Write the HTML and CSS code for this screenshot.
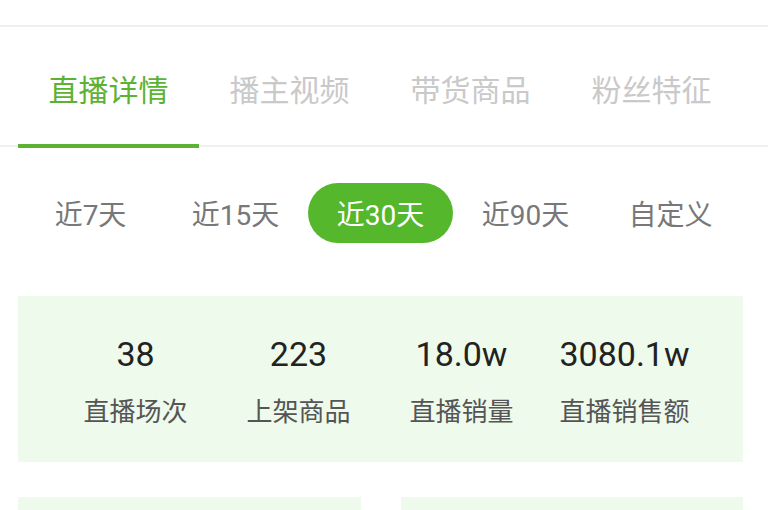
FILE: index.html
```html
<!DOCTYPE html>
<html lang="zh-CN">
<head>
<meta charset="utf-8">
<title>直播详情</title>
<link rel="stylesheet" href="styles.css">
</head>
<body>
<div class="topbar"></div>
<nav class="tabs">
  <div class="tab active">直播详情</div>
  <div class="tab">播主视频</div>
  <div class="tab">带货商品</div>
  <div class="tab">粉丝特征</div>
</nav>
<div class="ranges">
  <div class="range">近7天</div>
  <div class="range">近15天</div>
  <div class="range selected">近30天</div>
  <div class="range">近90天</div>
  <div class="range">自定义</div>
</div>
<section class="stats">
  <div class="stat"><div class="num">38</div><div class="label">直播场次</div></div>
  <div class="stat"><div class="num">223</div><div class="label">上架商品</div></div>
  <div class="stat"><div class="num">18.0w</div><div class="label">直播销量</div></div>
  <div class="stat"><div class="num">3080.1w</div><div class="label">直播销售额</div></div>
</section>
<div class="cards">
  <div class="card"></div>
  <div class="card"></div>
</div>
</body>
</html>
```

FILE: styles.css
```css
html, body {
  margin: 0;
  padding: 0;
  background: #ffffff;
  overflow: hidden;
}
body {
  font-family: Roboto, "Noto Sans CJK SC", sans-serif;
  width: 768px;
  height: 510px;
}
.topbar {
  height: 25px;
  border-bottom: 2px solid #efefef;
}
.tabs {
  display: flex;
  padding-left: 18px;
  height: 118px;
  border-bottom: 2px solid #f0f0f0;
  position: relative;
}
.tab {
  width: 181px;
  display: flex;
  align-items: center;
  justify-content: center;
  font-size: 30px;
  color: #c9c9c9;
  position: relative;
  padding-top: 4px;
  box-sizing: border-box;
}
.tab.active {
  color: #5cb233;
}
.tab.active::after {
  content: "";
  position: absolute;
  left: 0;
  right: 0;
  bottom: -3px;
  height: 4px;
  background: #5cb233;
}
.ranges {
  display: flex;
  padding-left: 18px;
  margin-top: 36px;
}
.range {
  width: 145px;
  height: 60px;
  display: flex;
  align-items: center;
  justify-content: center;
  font-size: 28px;
  color: #787878;
  border-radius: 30px;
}
.range.selected {
  background: #55b72b;
  color: #ffffff;
}
.stats {
  margin: 53px 25px 0 18px;
  height: 166px;
  background: #eefaeb;
  display: flex;
  box-sizing: border-box;
  padding-left: 36px;
}
.stat {
  width: 163px;
  display: flex;
  flex-direction: column;
  align-items: center;
  padding-top: 38px;
}
.num {
  font-size: 34px;
  line-height: 40px;
  color: #222222;
}
.label {
  font-size: 26px;
  line-height: 36px;
  color: #555555;
  margin-top: 20px;
}
.cards {
  display: flex;
  gap: 40px;
  margin: 35px 25px 0 18px;
}
.card {
  flex: 1;
  height: 60px;
  background: #eefaeb;
}
```
